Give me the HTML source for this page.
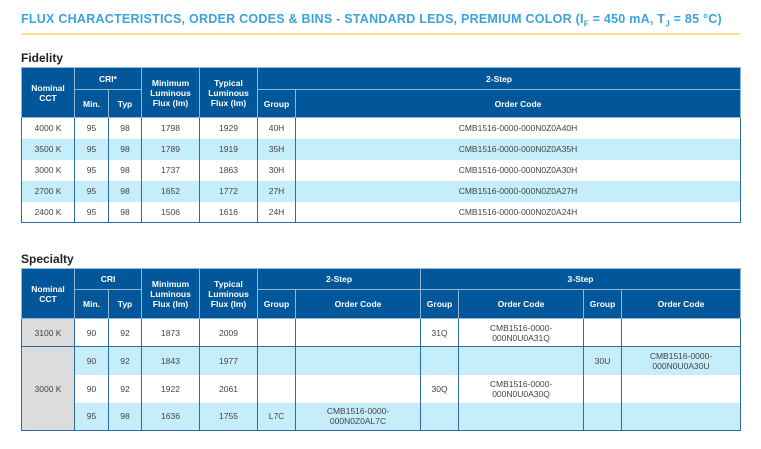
<!DOCTYPE html>
<html><head><meta charset="utf-8"><style>
body{margin:0;background:#fff;width:761px;height:449px;overflow:hidden;font-family:"Liberation Sans",Arial,sans-serif;}
.t{position:absolute;left:21px;top:12px;font-size:12.5px;letter-spacing:0.25px;font-weight:bold;color:#3aa3dc;white-space:nowrap}
.t sub{font-size:8px}
.line{position:absolute;left:21px;top:33px;width:719px;height:2px;background:#fbe08e}
.h{position:absolute;left:21px;font-size:12px;font-weight:bold;color:#222}
table{position:absolute;left:21px;border-collapse:collapse;table-layout:fixed;width:720px;font-size:8.5px;color:#444}
th{background:#02579a;color:#fff;font-weight:bold;border:1px solid #8fb6d8;font-size:8.5px;line-height:10px;padding:0}
td{border-left:1px solid #2f6ba6;border-right:1px solid #2f6ba6;text-align:center;padding:0;line-height:10px}
table{border:1.5px solid #2f6ba6}
tr.b td{background:#c6eefa}
tr.w td{background:#fff}
td.g{background:#dcdcdc!important}
tr.sep td{border-top:1px solid #2f6ba6}
</style></head><body>
<div class="t">FLUX CHARACTERISTICS, ORDER CODES &amp; BINS - STANDARD LEDS, PREMIUM COLOR (I<sub>F</sub> = 450 mA, T<sub>J</sub> = 85 °C)</div>
<div class="line"></div>
<div class="h" style="top:51px">Fidelity</div>
<table style="top:67px">
<colgroup><col style="width:53px"><col style="width:34px"><col style="width:33px"><col style="width:58px"><col style="width:58px"><col style="width:38px"><col></colgroup>
<tr style="height:22px"><th rowspan="2">Nominal<br>CCT</th><th colspan="2">CRI*</th><th rowspan="2">Minimum<br>Luminous<br>Flux (lm)</th><th rowspan="2">Typical<br>Luminous<br>Flux (lm)</th><th colspan="2">2-Step</th></tr>
<tr style="height:28px"><th>Min.</th><th>Typ</th><th>Group</th><th>Order Code</th></tr>
<tr class="w" style="height:21px"><td>4000 K</td><td>95</td><td>98</td><td>1798</td><td>1929</td><td>40H</td><td>CMB1516-0000-000N0Z0A40H</td></tr>
<tr class="b" style="height:21px"><td>3500 K</td><td>95</td><td>98</td><td>1789</td><td>1919</td><td>35H</td><td>CMB1516-0000-000N0Z0A35H</td></tr>
<tr class="w" style="height:21px"><td>3000 K</td><td>95</td><td>98</td><td>1737</td><td>1863</td><td>30H</td><td>CMB1516-0000-000N0Z0A30H</td></tr>
<tr class="b" style="height:21px"><td>2700 K</td><td>95</td><td>98</td><td>1652</td><td>1772</td><td>27H</td><td>CMB1516-0000-000N0Z0A27H</td></tr>
<tr class="w" style="height:21px"><td>2400 K</td><td>95</td><td>98</td><td>1506</td><td>1616</td><td>24H</td><td>CMB1516-0000-000N0Z0A24H</td></tr>
</table>
<div class="h" style="top:252px">Specialty</div>
<table style="top:268px">
<colgroup><col style="width:53px"><col style="width:34px"><col style="width:33px"><col style="width:58px"><col style="width:58px"><col style="width:38px"><col style="width:125px"><col style="width:38px"><col style="width:125px"><col style="width:38px"><col></colgroup>
<tr style="height:21px"><th rowspan="2">Nominal<br>CCT</th><th colspan="2">CRI</th><th rowspan="2">Minimum<br>Luminous<br>Flux (lm)</th><th rowspan="2">Typical<br>Luminous<br>Flux (lm)</th><th colspan="2">2-Step</th><th colspan="4">3-Step</th></tr>
<tr style="height:29px"><th>Min.</th><th>Typ</th><th>Group</th><th>Order Code</th><th>Group</th><th>Order Code</th><th>Group</th><th>Order Code</th></tr>
<tr class="w" style="height:28px"><td class="g">3100 K</td><td>90</td><td>92</td><td>1873</td><td>2009</td><td></td><td></td><td>31Q</td><td>CMB1516-0000-<br>000N0U0A31Q</td><td></td><td></td></tr>
<tr class="b sep" style="height:28px"><td class="g" rowspan="3">3000 K</td><td>90</td><td>92</td><td>1843</td><td>1977</td><td></td><td></td><td></td><td></td><td>30U</td><td>CMB1516-0000-<br>000N0U0A30U</td></tr>
<tr class="w" style="height:28px"><td>90</td><td>92</td><td>1922</td><td>2061</td><td></td><td></td><td>30Q</td><td>CMB1516-0000-<br>000N0U0A30Q</td><td></td><td></td></tr>
<tr class="b" style="height:28px"><td>95</td><td>98</td><td>1636</td><td>1755</td><td>L7C</td><td>CMB1516-0000-<br>000N0Z0AL7C</td><td></td><td></td><td></td><td></td></tr>
</table>
</body></html>
